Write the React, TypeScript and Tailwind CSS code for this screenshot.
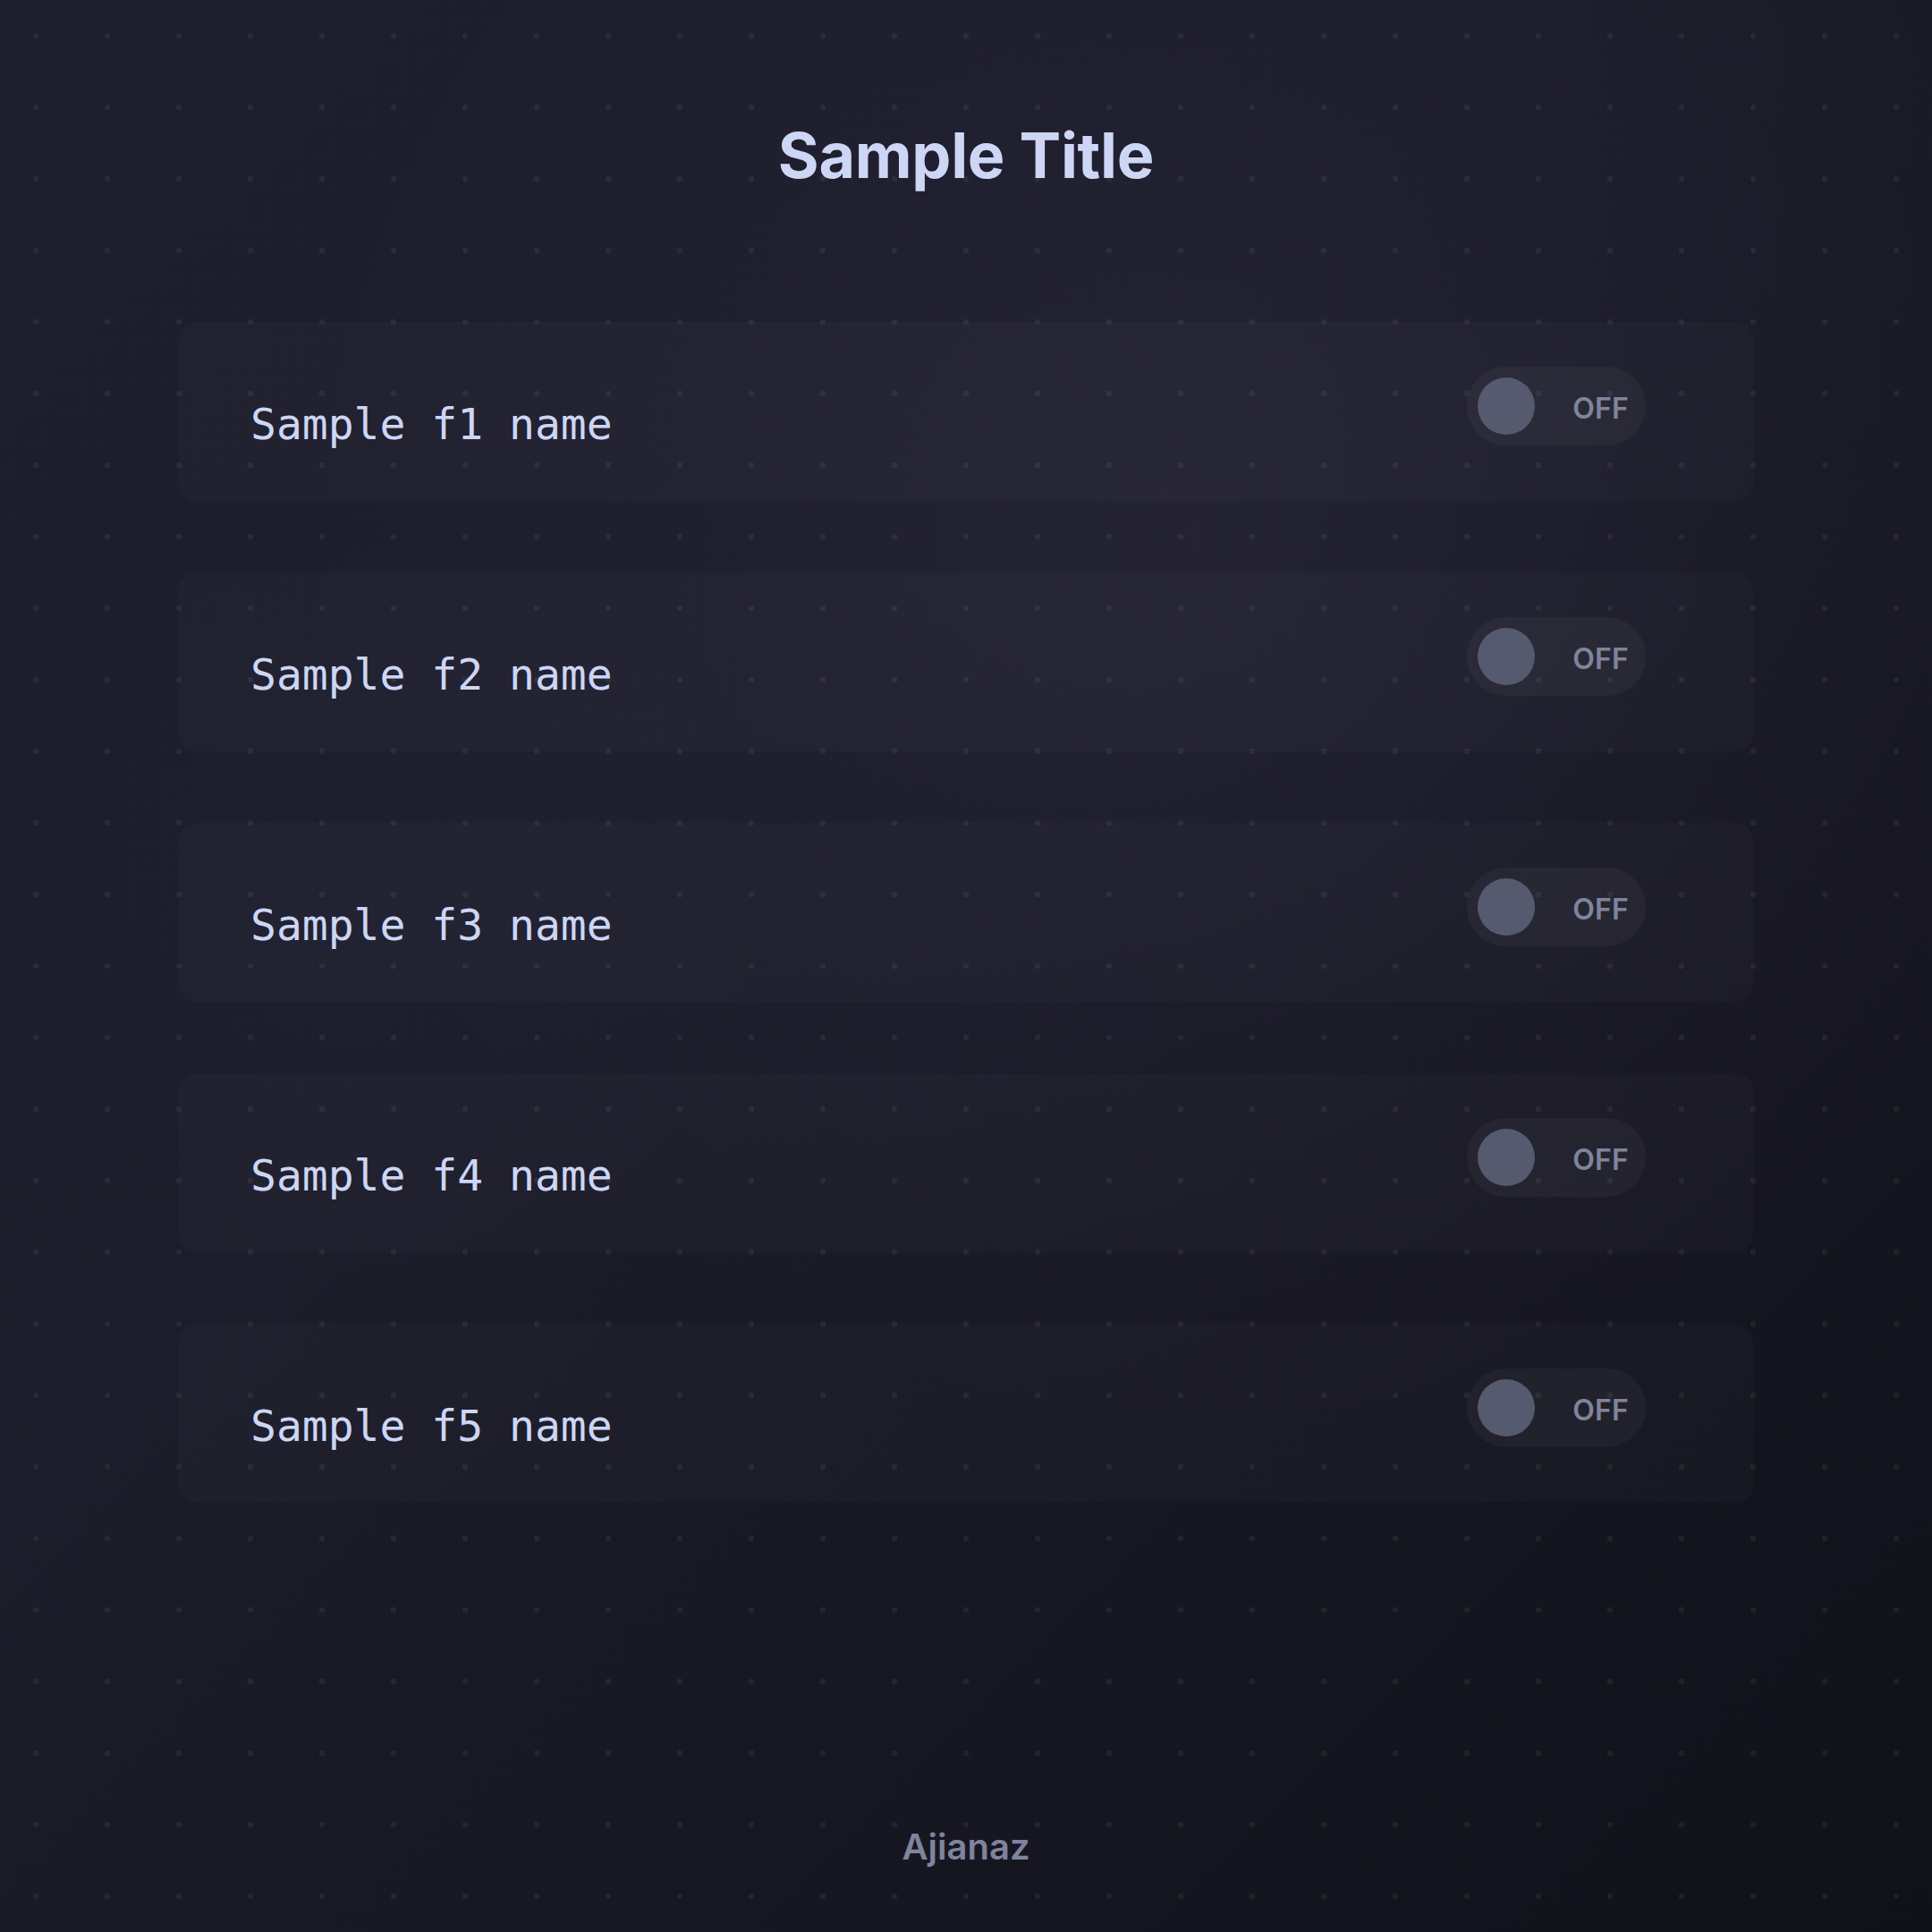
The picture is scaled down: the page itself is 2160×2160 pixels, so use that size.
import React from "react";

const features = ["f1", "f2", "f3", "f4", "f5"];

function Toggle() {
  return (
    <div className="mb-[12px] flex h-[88px] w-[200px] items-center justify-between rounded-full bg-white/[0.035] pl-[12px] pr-[19px]">
      <span className="h-[64px] w-[64px] rounded-full bg-[#565a6e]" />
      <span className="pt-[6px] font-['Inter',sans-serif] text-[32px] font-semibold leading-none tracking-[0.2px] text-[#7f849c]">
        OFF
      </span>
    </div>
  );
}

function FeatureRow({ id }: { id: string }) {
  return (
    <div className="flex h-[200px] w-[1760px] items-center justify-between rounded-[20px] bg-white/[0.018] pl-[80px] pr-[120px]">
      <span className="mt-[27px] whitespace-pre font-['DejaVu_Sans_Mono',monospace] text-[48px] leading-none text-[#cdd6f4]">
        Sample {id} name
      </span>
      <Toggle />
    </div>
  );
}

export default function App() {
  return (
    <div className="relative flex h-[2160px] w-full flex-col items-center overflow-hidden bg-[linear-gradient(135deg,#1e1e2e_0%,#1c1c2a_40%,#161621_75%,#11111a_100%)]">
      {/* soft colour glows */}
      <div className="pointer-events-none absolute inset-0 bg-[radial-gradient(circle_at_62%_28%,rgba(180,160,240,0.06)_0%,rgba(180,160,240,0.025)_25%,transparent_50%)]" />
      <div className="pointer-events-none absolute inset-0 bg-[radial-gradient(circle_at_20%_47%,rgba(120,160,240,0.02)_0%,transparent_22%)]" />
      {/* dot grid */}
      <div className="pointer-events-none absolute inset-0 bg-[radial-gradient(circle,rgba(255,255,255,0.055)_3px,transparent_3.6px)] bg-[length:80px_80px]" />

      <div className="relative flex h-full w-full flex-col items-center">
        <h1 className="mt-[139px] font-['Inter',sans-serif] text-[70px] font-bold leading-none tracking-[-0.3px] text-[#cdd6f4]">
          Sample Title
        </h1>

        <div className="mt-[151px] flex flex-col gap-[80px]">
          {features.map((f) => (
            <FeatureRow key={f} id={f} />
          ))}
        </div>

        <footer className="mt-auto pb-[75px] font-['Inter',sans-serif] text-[40px] font-semibold leading-none text-[#7f849c]">
          Ajianaz
        </footer>
      </div>
    </div>
  );
}
